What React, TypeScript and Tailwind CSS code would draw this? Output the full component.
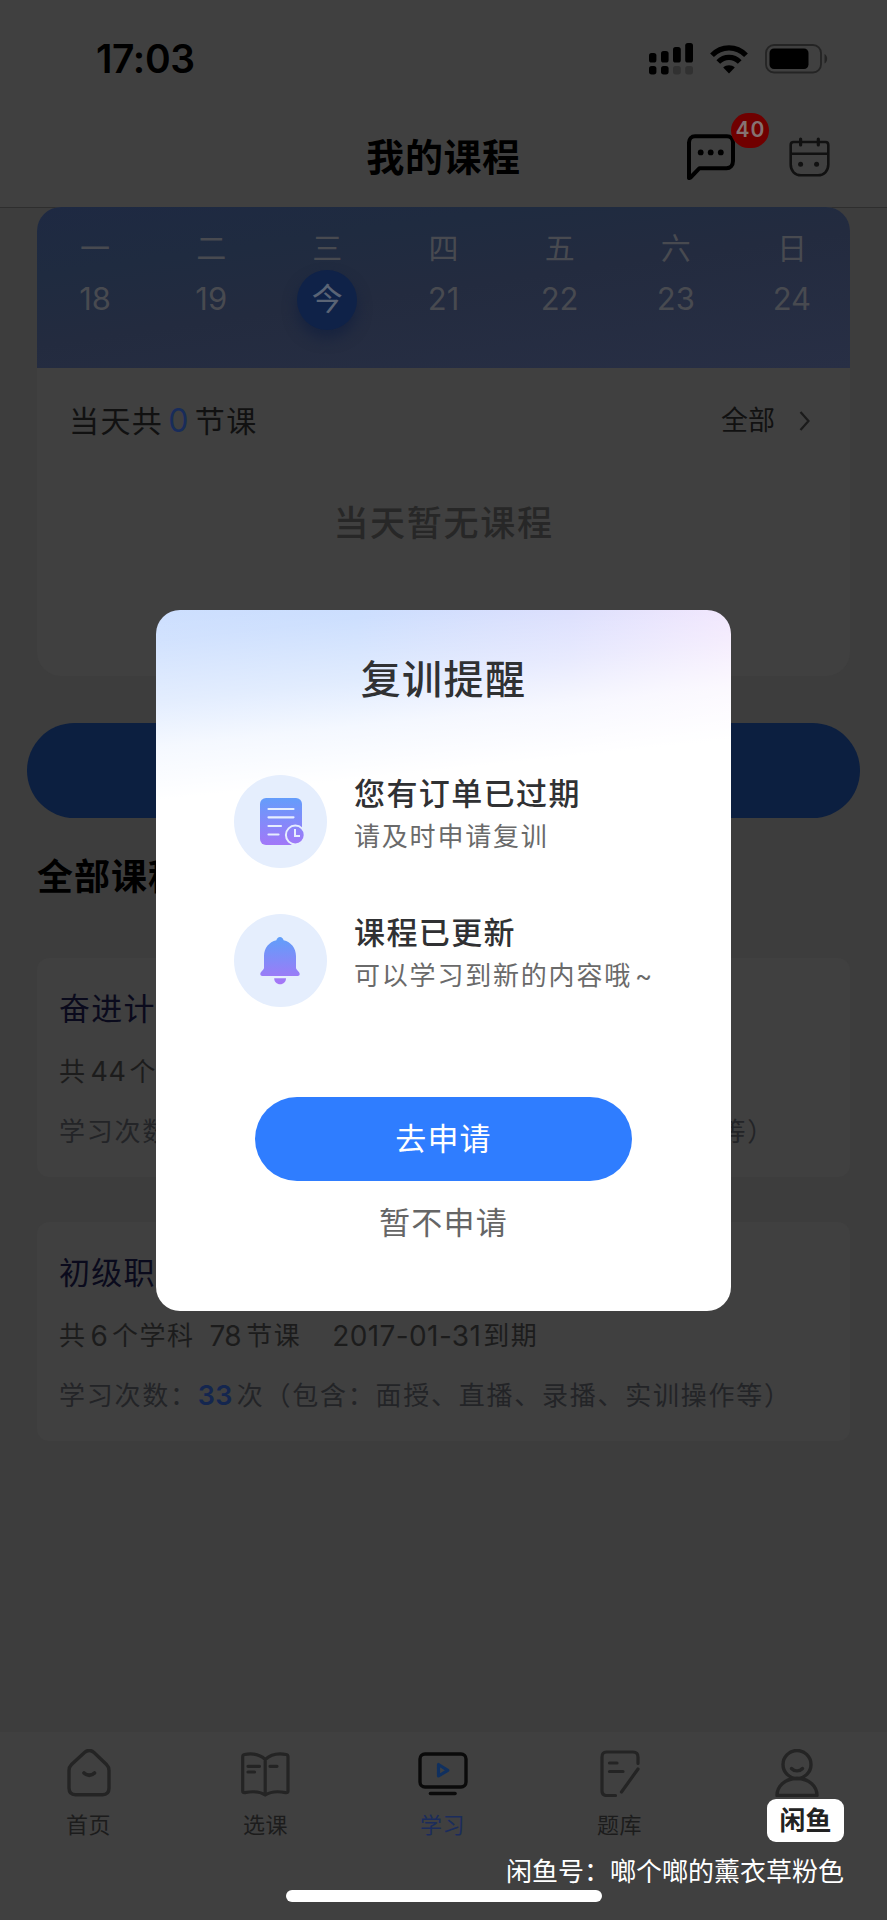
import type { ReactNode } from "react";

const days = [
  { name: "一", date: "18" },
  { name: "二", date: "19" },
  { name: "三", date: "今", today: true },
  { name: "四", date: "21" },
  { name: "五", date: "22" },
  { name: "六", date: "23" },
  { name: "日", date: "24" },
];

function SignalIcon() {
  return (
    <svg width="45" height="32" viewBox="0 0 45 32" fill="#000">
      <rect x="0" y="10" width="7.4" height="9.5" rx="2.6" />
      <rect x="12" y="8" width="7.6" height="11.5" rx="2.6" />
      <rect x="24" y="4" width="7.8" height="15.5" rx="2.6" />
      <rect x="36.2" y="0" width="7.8" height="19.5" rx="2.6" />
      <rect x="0" y="23" width="7.4" height="8.4" rx="2.6" />
      <rect x="12" y="23" width="7.6" height="8.4" rx="2.6" />
      <rect x="24" y="23" width="7.8" height="8.4" rx="2.6" fill="#313131" />
      <rect x="36.2" y="23" width="7.8" height="8.4" rx="2.6" fill="#313131" />
    </svg>
  );
}

function WifiIcon() {
  return (
    <svg width="38" height="29" viewBox="0 0 38 29" fill="none" stroke="#000" strokeWidth="5.2">
      <path d="M2 10.2C11.5 0.3 26.5 0.3 36 10.2" />
      <path d="M8.3 17C14.3 10.9 23.7 10.9 29.7 17" />
      <path d="M19 28.5L13.2 22.6C16.3 19.6 21.7 19.6 24.8 22.6Z" fill="#000" stroke="none" />
    </svg>
  );
}

function BatteryIcon() {
  return (
    <svg width="63" height="30" viewBox="0 0 63 30" fill="none">
      <rect x="1" y="1" width="55" height="27.5" rx="8" stroke="#242424" strokeWidth="1.8" />
      <rect x="4.5" y="4.5" width="39" height="20.5" rx="4.5" fill="#000" />
      <path d="M59.5 10C63 11.5 63 18 59.5 19.5Z" fill="#242424" />
    </svg>
  );
}

function ChatIcon() {
  return (
    <svg width="48" height="47" viewBox="0 0 48 47" fill="none" stroke="#000" strokeWidth="4" strokeLinejoin="round">
      <path d="M2 44V8.5C2 5 4.5 2.2 8 2.2H40C43.5 2.2 46 5 46 8.5V27C46 31.5 43 34.2 39.5 34.2H12.5L3.5 43.5Z" />
      <g fill="#000" stroke="none">
        <circle cx="13.7" cy="18.4" r="2.9" />
        <circle cx="23.7" cy="18.4" r="2.9" />
        <circle cx="33.8" cy="18.4" r="2.9" />
      </g>
    </svg>
  );
}

function CalendarIcon() {
  return (
    <svg width="41" height="40" viewBox="0 0 41 40" fill="none" stroke="#111" strokeWidth="2.6" strokeLinecap="round">
      <path d="M4.5 5H36.5C38.3 5 39.3 6 39.3 8V27.5C39.3 34 35 38.3 29 38.3H12C6 38.3 1.7 34 1.7 27.5V8C1.7 6 2.7 5 4.5 5Z" />
      <path d="M2 16.8H39" strokeLinecap="butt" />
      <path d="M11.6 2V8M29.3 2V8" strokeWidth="3.2" />
      <g fill="#111" stroke="none">
        <circle cx="11.6" cy="27.3" r="2.5" />
        <circle cx="27.6" cy="27.3" r="2.5" />
      </g>
    </svg>
  );
}

function OrderIcon() {
  return (
    <svg className="ml-[4px]" width="46" height="48" viewBox="0 0 46 48" fill="none">
      <defs>
        <linearGradient id="order" x1="0" y1="0" x2="0" y2="48" gradientUnits="userSpaceOnUse">
          <stop stopColor="#649dfb" />
          <stop offset="1" stopColor="#a377f8" />
        </linearGradient>
      </defs>
      <rect width="42" height="47" rx="6" fill="url(#order)" />
      <path d="M8.5 11H33.5M8.5 19.3H33.5M8.5 28H21M8.5 36.5H18.5" stroke="#e6eefe" strokeWidth="2.2" strokeLinecap="round" />
      <circle cx="35.3" cy="37" r="9.4" fill="url(#order)" stroke="#e6eefe" strokeWidth="2" />
      <path d="M35 31V38H40" stroke="#e6eefe" strokeWidth="2" />
    </svg>
  );
}

function BellIcon() {
  return (
    <svg className="mr-[2px]" width="40" height="48" viewBox="0 0 40 48" fill="url(#bell)">
      <defs>
        <linearGradient id="bell" x1="0" y1="0" x2="0" y2="48" gradientUnits="userSpaceOnUse">
          <stop stopColor="#5f9ffa" />
          <stop offset="1" stopColor="#a874f6" />
        </linearGradient>
      </defs>
      <path d="M20 0C21.8 0 23.2 1.3 23.6 3.2C31 5 36 11 36 19V31C36 32.5 39.5 34.5 39.7 37C39.7 38.3 39 39 37.5 39H2.5C1 39 0.3 38.3 0.3 37C0.5 34.5 4 32.5 4 31V19C4 11 9 5 16.4 3.2C16.8 1.3 18.2 0 20 0Z" />
      <path d="M14.2 41.3H26C26 44.8 23.5 47.3 20.1 47.3C16.7 47.3 14.2 44.8 14.2 41.3Z" />
    </svg>
  );
}

function HomeIcon() {
  return (
    <svg width="44" height="48" viewBox="0 0 44 48" fill="none" stroke="#242424" strokeWidth="3.4" strokeLinecap="round">
      <path d="M17.5 3.5C20.5 0.9 24 0.9 27 3.5L39.5 15.5C41.4 17.4 42 19 42 21.5V39C42 43.3 39.5 45.7 35.5 45.7H8.5C4.5 45.7 2 43.3 2 39V21.5C2 19 2.6 17.4 4.5 15.5Z" />
      <path d="M17 24C20 27 24.5 27 27.5 24" strokeWidth="3.8" />
    </svg>
  );
}

function BookIcon() {
  return (
    <svg width="49" height="48" viewBox="0 0 49 48" fill="none" stroke="#242424" strokeWidth="3.2" strokeLinecap="round" strokeLinejoin="round">
      <path d="M24.2 10.5C18.5 5 10 4.3 3.5 5.5C2.2 5.8 1.7 6.5 1.7 7.7V42C1.7 43.5 2.5 44 4 43.6C11 42.2 18.5 42.2 24.2 46C30 42.2 37.5 42.2 44.5 43.6C46.2 44 47 43.5 47 42V7.7C47 6.5 46.5 5.8 45.2 5.5C38.5 4.3 30 5 24.2 10.5ZM24.2 10.5V45.5" />
      <path d="M7 17.3H18.5M7 23H13.5M29 17.3H36" />
    </svg>
  );
}

function StudyIcon() {
  return (
    <svg width="50" height="48" viewBox="0 0 50 48" fill="none" strokeLinecap="round" strokeLinejoin="round">
      <rect x="2" y="5" width="46" height="33" rx="5" stroke="#0a0a0a" strokeWidth="3.4" />
      <path d="M12.5 44.5H37" stroke="#0a0a0a" strokeWidth="3.6" />
      <path d="M20.5 15.5V27L29.8 21.3Z" stroke="#10305f" strokeWidth="3.2" />
    </svg>
  );
}

function QuizIcon() {
  return (
    <svg width="40" height="48" viewBox="0 0 40 48" fill="none" stroke="#242424" strokeWidth="3.2" strokeLinecap="round">
      <path d="M38 14.5V8C38 4.5 36.5 3 33 3H6.5C3.5 3 2 4.5 2 8V41.5C2 45 3.5 46.5 6.5 46.5H15.5" />
      <path d="M38 20L21.5 43" />
      <path d="M9.5 14H17M9.5 22.5H23" />
    </svg>
  );
}

function MineIcon() {
  return (
    <svg width="44" height="48" viewBox="0 0 44 48" fill="none" stroke="#242424" strokeWidth="3.4" strokeLinecap="round" strokeLinejoin="round">
      <circle cx="22" cy="15.5" r="14" />
      <path d="M16.5 19.5C19.5 22.7 24.5 22.7 27.5 19.5" />
      <path d="M22 29.5C10 29.5 2 37 2 46.5H42C42 37 34 29.5 22 29.5Z" />
    </svg>
  );
}

function Notice({ icon, title, text }: { icon: ReactNode; title: string; text: ReactNode }) {
  return (
    <div className="flex h-[93px]">
      <div className="flex size-[93px] shrink-0 items-center justify-center rounded-full bg-[#e5eefd]">{icon}</div>
      <div className="-mt-[3px] ml-[27px] whitespace-nowrap">
        <p className="text-[31px] font-medium leading-[44px] tracking-[1.4px] text-[#303133]">{title}</p>
        <p className="text-[26px] leading-[42px] tracking-[1.8px] text-[#6a6a6a]">{text}</p>
      </div>
    </div>
  );
}

function CourseCard({ title, info, count, className }: { title: string; info: ReactNode; count: string; className?: string }) {
  return (
    <section className={`mx-[37px] flex h-[219px] flex-col whitespace-nowrap rounded-[12px] bg-[#404040] pl-[22px] ${className ?? ""}`}>
      <h3 className="mt-[29px] text-[31px] leading-[44px] tracking-[1.3px] text-[#0a0a1c]">{title}</h3>
      <p className="mt-[21px] flex text-[26px] leading-[40px] tracking-[1.5px] text-[#1c1c1c]">{info}</p>
      <p className="mt-[20px] text-[26px] leading-[40px] tracking-[1.75px] text-[#232427]">
        学习次数：<span className="mr-[4px] text-[27px] font-semibold tracking-[0.3px] text-[#14264f]">{count}</span>
        次（包含：面授、直播、录播、实训操作等）
      </p>
    </section>
  );
}

const tabs = [
  { label: "首页", icon: <HomeIcon /> },
  { label: "选课", icon: <BookIcon /> },
  { label: "学习", icon: <StudyIcon />, active: true },
  { label: "题库", icon: <QuizIcon /> },
  { label: "我的", icon: <MineIcon />, hidden: true },
];

export default function App() {
  return (
    <div className="relative flex h-[1920px] w-[887px] flex-col overflow-hidden bg-[#3d3d3d] font-['Inter','Noto_Sans_CJK_SC',sans-serif]">
      <header className="flex h-[208px] shrink-0 flex-col border-b border-[#2e2e2e] bg-[#404040]">
        <div className="flex h-[118px] items-center pl-[96px] pr-[59px]">
          <span className="text-[39px] font-semibold tracking-[-0.4px] text-black">17:03</span>
          <div className="ml-auto flex items-center">
            <SignalIcon />
            <span className="ml-[16px]">
              <WifiIcon />
            </span>
            <span className="ml-[17px]">
              <BatteryIcon />
            </span>
          </div>
        </div>
        <div className="grid h-[78px] grid-cols-[1fr_auto_1fr] items-center">
          <h1 className="col-start-2 text-[38px] font-bold leading-[46px] tracking-[0.6px] text-black">我的课程</h1>
          <div className="flex items-center justify-end pr-[57px]">
            <div className="relative mr-[54px]">
              <ChatIcon />
              <span className="absolute -top-[21px] left-[44px] flex h-[35px] w-[38px] items-center justify-center rounded-full bg-[#700000] pl-px text-[21px] font-semibold tracking-[1px] text-[#857272]">
                40
              </span>
            </div>
            <CalendarIcon />
          </div>
        </div>
      </header>

      <section className="relative mx-[37px] -mt-px h-[469px] shrink-0 overflow-hidden rounded-[24px] bg-[#404040]">
        <div className="grid h-[161px] grid-cols-7 bg-[linear-gradient(172deg,#1e2942_0%,#1f2b40_25%,#232b3f_50%,#282f45_100%)] pt-[20px] text-center text-[#484a50]">
          {days.map((day) => (
            <div key={day.name} className="flex flex-col items-center">
              <span className="text-[30px] leading-[43px]">{day.name}</span>
              {day.today ? (
                <span className="flex size-[60px] items-center justify-center rounded-full bg-[#0f2248] pb-[2px] text-[31px] text-[#5a6475] shadow-[0_8px_14px_#17233f]">
                  {day.date}
                </span>
              ) : (
                <span className="-mt-px text-[31px] leading-[60px]">{day.date}</span>
              )}
            </div>
          ))}
        </div>
        <div className="mt-[31px] flex h-[44px] items-center pl-[32px] pr-[40px] text-[#111]">
          <span className="text-[30px] tracking-[1.4px]">
            当天共<span className="mx-[5px] text-[32px] text-[#182c5a]">0</span>节课
          </span>
          <span className="ml-auto pt-px text-[27px]">全部</span>
          <svg className="ml-[24px]" width="11" height="20" viewBox="0 0 11 20" fill="none" stroke="#1b1b1b" strokeWidth="2.2">
            <path d="M1.5 1L9.5 10L1.5 19" />
          </svg>
        </div>
        <p className="mt-[55px] text-center text-[35px] font-medium leading-[50px] tracking-[1.7px] text-[#272727]">当天暂无课程</p>
      </section>

      <div className="mx-[27px] mt-[47px] h-[95px] shrink-0 rounded-full bg-[#0c1f40]" />

      <h2 className="ml-[37px] mt-[34px] text-[36px] font-bold leading-[50px] tracking-[1px] text-black">全部课程</h2>

      <CourseCard
        className="mt-[56px]"
        title="奋进计划"
        count="0"
        info={
          <>
            共<span className="ml-[4px] mr-[3px] text-[27px] tracking-[0.5px]">44</span>个学科
          </>
        }
      />
      <CourseCard
        className="mt-[45px]"
        title="初级职称"
        count="33"
        info={
          <>
            共<span className="mx-[4px] text-[28px] tracking-normal">6</span>个学科
            <span className="ml-[15px] mr-[5px] text-[28px] tracking-[-0.5px]">78</span>节课
            <span className="ml-[31px] mr-[2px] text-[28px] tracking-[0.4px]">2017-01-31</span>到期
          </>
        }
      />

      <nav className="mt-auto grid h-[188px] shrink-0 grid-cols-5 bg-[#404040] pr-[2px] pt-[17px]">
        {tabs.map((tab) => (
          <div key={tab.label} className="flex flex-col items-center">
            {tab.icon}
            {!tab.hidden && (
              <span className={`mt-[11px] text-[22px] leading-[34px] tracking-[0.5px] ${tab.active ? "text-[#1b2c5c]" : "text-[#1c1c1c]"}`}>
                {tab.label}
              </span>
            )}
          </div>
        ))}
      </nav>

      {/* reminder dialog */}
      <div className="absolute inset-0 flex items-start justify-center pt-[610px]">
        <div className="flex h-[701px] w-[575px] flex-col items-center rounded-[24px] bg-white bg-[linear-gradient(174deg,rgba(255,255,255,0)_0%,rgba(255,255,255,0.1)_4%,rgba(255,255,255,0.45)_12%,rgba(255,255,255,0.8)_18%,#fff_25%),linear-gradient(90deg,#cddffe_0%,#c8dcfe_35%,#d5d9fd_72%,#eddffc_100%)]">
          <h2 className="mt-[42px] text-[40px] font-medium leading-[56px] tracking-[1.4px] text-[#303133]">复训提醒</h2>
          <div className="mt-[67px] flex w-full flex-col gap-[46px] pl-[78px]">
            <Notice icon={<OrderIcon />} title="您有订单已过期" text="请及时申请复训" />
            <Notice
              icon={<BellIcon />}
              title="课程已更新"
              text={
                <>
                  可以学习到新的内容哦<span className="ml-[3px]">~</span>
                </>
              }
            />
          </div>
          <button className="mt-[90px] h-[84px] w-[377px] rounded-full bg-[#2f7dff] text-[31px] tracking-[1.2px] text-white">去申请</button>
          <button className="mt-[20px] text-[31px] leading-[44px] tracking-[1.2px] text-[#666]">暂不申请</button>
        </div>
      </div>

      {/* watermark and home indicator */}
      <div className="absolute bottom-0 right-[43px] flex h-[121px] flex-col items-end">
        <div className="flex h-[43px] w-[77px] items-center justify-center rounded-[9px] bg-white text-[26px] font-bold text-[#222]">闲鱼</div>
        <p className="mt-[11px] whitespace-nowrap text-[26px] leading-[38px] text-white">闲鱼号：啷个啷的薰衣草粉色</p>
      </div>
      <div className="absolute bottom-[18px] left-[286px] h-[12px] w-[316px] rounded-full bg-white" />
    </div>
  );
}
